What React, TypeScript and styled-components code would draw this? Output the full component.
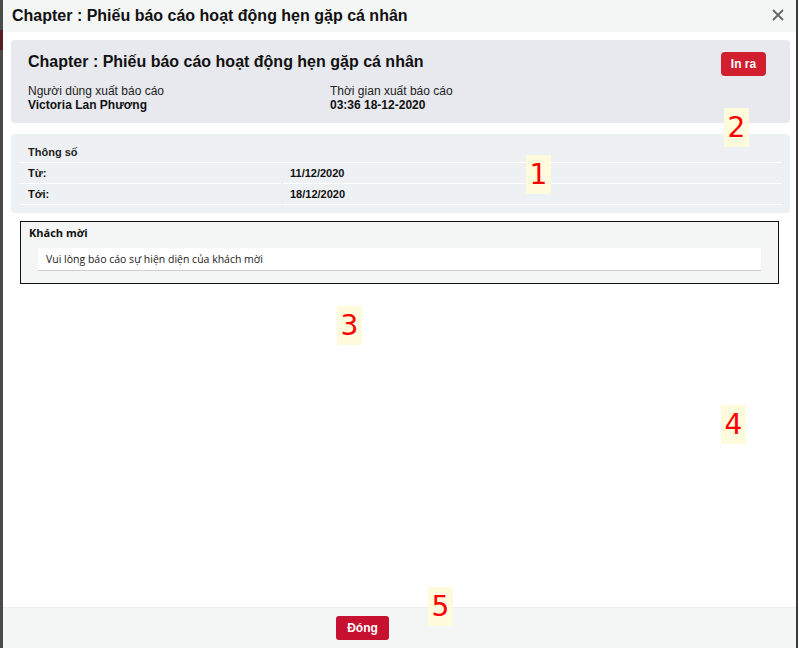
import React from "react";
import styled, { createGlobalStyle } from "styled-components";

const GlobalStyle = createGlobalStyle`
  html, body {
    margin: 0;
    padding: 0;
    background: #4a4a4a;
  }
  body {
    font-family: "Liberation Sans", Arial, sans-serif;
    color: #111;
  }
`;

const App = () => {
  return (
    <>
      <GlobalStyle />
      <Page>
        <LeftEdge />
        <Modal>
          <Header>
            <HeaderTitle>Chapter : Phiếu báo cáo hoạt động hẹn gặp cá nhân</HeaderTitle>
            <CloseButton aria-label="close">
              <svg width="12" height="12" viewBox="0 0 12 12">
                <path d="M1 1L11 11M11 1L1 11" stroke="#666" strokeWidth="1.8" />
              </svg>
            </CloseButton>
          </Header>
          <Body>
            <InfoCard>
              <InfoTop>
                <CardTitle>Chapter : Phiếu báo cáo hoạt động hẹn gặp cá nhân</CardTitle>
                <RedButton>In ra</RedButton>
              </InfoTop>
              <InfoGrid>
                <InfoCell>
                  <InfoLabel>Người dùng xuất báo cáo</InfoLabel>
                  <InfoValue>Victoria Lan Phương</InfoValue>
                </InfoCell>
                <InfoCell>
                  <InfoLabel>Thời gian xuất báo cáo</InfoLabel>
                  <InfoValue>03:36 18-12-2020</InfoValue>
                </InfoCell>
              </InfoGrid>
            </InfoCard>

            <ParamCard>
              <ParamHead>Thông số</ParamHead>
              <ParamRow>
                <ParamKey>Từ:</ParamKey>
                <ParamVal>11/12/2020</ParamVal>
              </ParamRow>
              <ParamRow>
                <ParamKey>Tới:</ParamKey>
                <ParamVal>18/12/2020</ParamVal>
              </ParamRow>
            </ParamCard>

            <GuestBox>
              <GuestTitle>Khách mời</GuestTitle>
              <GuestNote>Vui lòng báo cáo sự hiện diện của khách mời</GuestNote>
            </GuestBox>
          </Body>
          <Footer>
            <CloseRed>Đóng</CloseRed>
          </Footer>

          <Marker style={{ left: 523, top: 155 }}>1</Marker>
          <Marker style={{ left: 721, top: 108 }}>2</Marker>
          <Marker style={{ left: 334, top: 306 }}>3</Marker>
          <Marker style={{ left: 718, top: 405 }}>4</Marker>
          <Marker style={{ left: 425, top: 587 }}>5</Marker>
        </Modal>
      </Page>
    </>
  );
};

export default App;

const Page = styled.div`
  display: flex;
  height: 648px;
  width: 798px;
  overflow: hidden;
`;

const LeftEdge = styled.div`
  width: 3px;
  flex-shrink: 0;
  background: linear-gradient(
    to bottom,
    #4a4a4a 0px,
    #4a4a4a 30px,
    #5a1e22 30px,
    #5a1e22 50px,
    #4a4a4a 50px
  );
`;

const Modal = styled.div`
  position: relative;
  width: 793px;
  display: flex;
  flex-direction: column;
  background: #fff;
  border-right: 2px solid #3a3a3a;
`;

const Header = styled.div`
  height: 32px;
  flex-shrink: 0;
  display: flex;
  align-items: center;
  justify-content: space-between;
  padding: 0 12px 0 9px;
  background: #f4f5f5;
`;

const HeaderTitle = styled.h4`
  margin: 0;
  font-size: 16px;
  font-weight: bold;
  color: #111;
`;

const CloseButton = styled.button`
  border: none;
  background: none;
  padding: 0;
  margin-top: -2px;
  display: flex;
  cursor: pointer;
`;

const Body = styled.div`
  flex: 1;
  padding: 8px 6px 0 8px;
  display: flex;
  flex-direction: column;
`;

const InfoCard = styled.div`
  background: #e8e9ee;
  border-radius: 4px;
  padding: 12px 24px 12px 17px;
  height: 83px;
  box-sizing: border-box;
`;

const InfoTop = styled.div`
  display: flex;
  justify-content: space-between;
  align-items: flex-start;
`;

const CardTitle = styled.h3`
  margin: 0;
  font-size: 16px;
  font-weight: bold;
  line-height: 19px;
`;

const RedButton = styled.button`
  height: 24px;
  width: 45px;
  border: none;
  border-radius: 4px;
  background: #d11f2f;
  color: #fff;
  font-family: "Liberation Sans", Arial, sans-serif;
  font-size: 12px;
  font-weight: bold;
  padding: 0;
`;

const InfoGrid = styled.div`
  display: grid;
  grid-template-columns: 302px 1fr;
  margin-top: 8px;
`;

const InfoCell = styled.div`
  display: flex;
  flex-direction: column;
`;

const InfoLabel = styled.span`
  font-size: 12px;
  line-height: 14px;
  color: #222;
`;

const InfoValue = styled.span`
  font-size: 12px;
  line-height: 14px;
  font-weight: bold;
`;

const ParamCard = styled.div`
  margin-top: 11px;
  background: #eef1f4;
  border-radius: 4px;
  padding: 8px 8px 8px 9px;
  height: 79px;
  box-sizing: border-box;
`;

const ParamHead = styled.div`
  font-size: 11px;
  font-weight: bold;
  line-height: 20px;
  padding-left: 8px;
  border-bottom: 1px solid #fff;
  color: #222;
`;

const ParamRow = styled.div`
  display: grid;
  grid-template-columns: 261px 1fr;
  column-gap: 2px;
`;

const ParamKey = styled.div`
  font-size: 11px;
  font-weight: bold;
  line-height: 20px;
  padding-left: 8px;
  border-bottom: 1px solid #fff;
`;

const ParamVal = styled.div`
  font-size: 11px;
  font-weight: bold;
  line-height: 20px;
  padding-left: 7px;
  border-bottom: 1px solid #fff;
`;

const GuestBox = styled.div`
  margin: 8px 11px 0 9px;
  border: 1px solid #111;
  background: #f4f5f5;
  padding: 3px 17px 12px 8px;
  height: 63px;
  box-sizing: border-box;
`;

const GuestTitle = styled.div`
  font-family: "Open Sans", "Liberation Sans", sans-serif;
  font-size: 11px;
  font-weight: bold;
  line-height: 16px;
  color: #111;
`;

const GuestNote = styled.div`
  margin: 7px 0 0 9px;
  background: #fff;
  border-bottom: 1px solid #cfcfcf;
  height: 22px;
  line-height: 22px;
  padding-left: 8px;
  font-family: "Open Sans", "Liberation Sans", sans-serif;
  font-size: 10.5px;
  color: #222;
`;

const Footer = styled.div`
  height: 41px;
  flex-shrink: 0;
  background: #f4f5f5;
  border-top: 1px solid #eceeee;
  display: flex;
  justify-content: center;
  align-items: flex-start;
  padding: 8px 74px 0 0;
  box-sizing: border-box;
`;

const CloseRed = styled.button`
  width: 53px;
  height: 24px;
  border: none;
  border-radius: 3px;
  background: #c81030;
  color: #fff;
  font-family: "Liberation Sans", Arial, sans-serif;
  font-size: 12px;
  font-weight: bold;
  padding: 0;
`;

const Marker = styled.div`
  position: absolute;
  width: 25px;
  height: 39px;
  background: #fdfbdc;
  color: #ff0000;
  font-family: "DejaVu Sans", sans-serif;
  font-size: 28px;
  line-height: 39px;
  text-align: center;
`;
